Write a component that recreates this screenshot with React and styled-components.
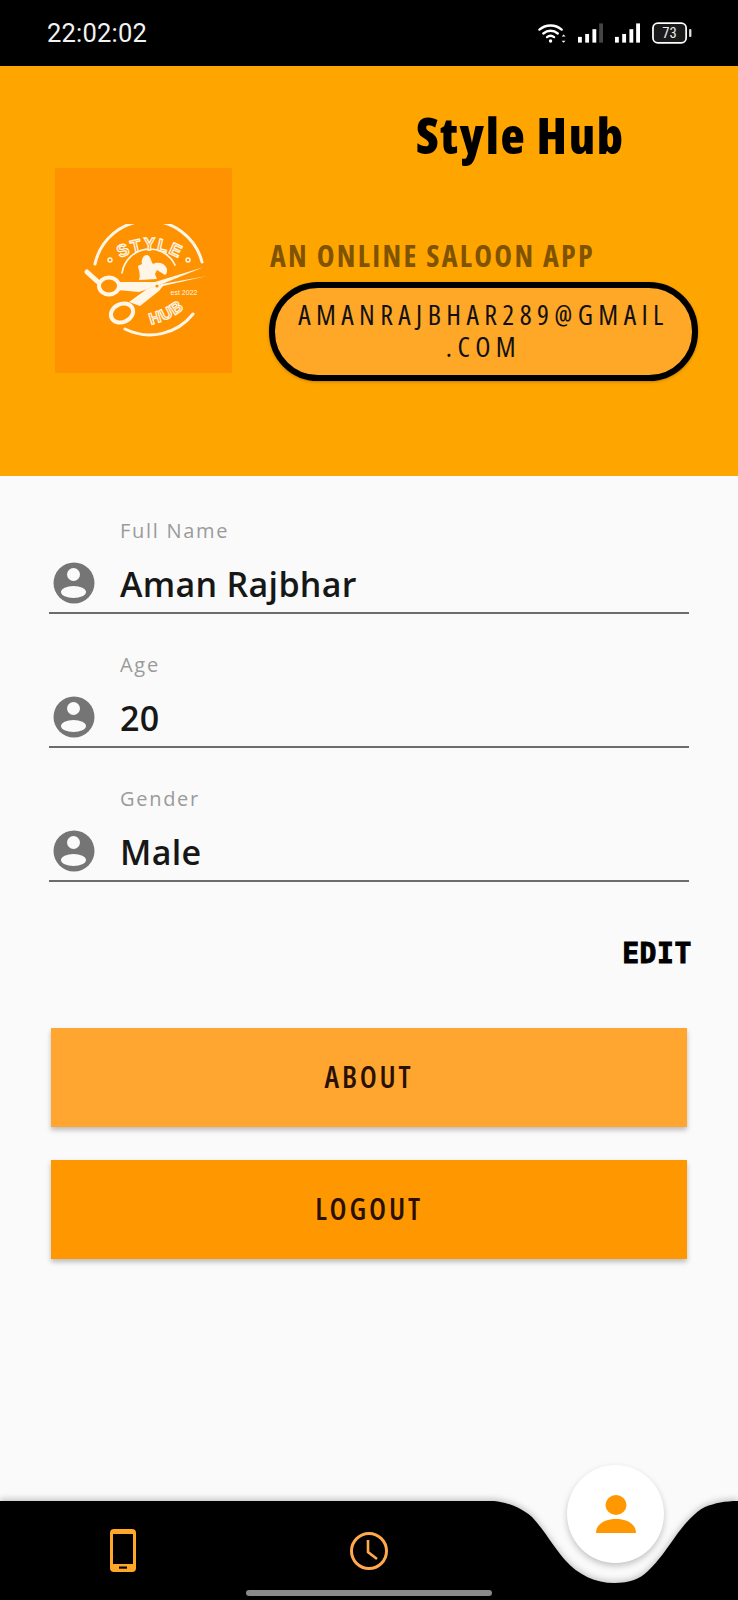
import React from "react";
import styled, { createGlobalStyle } from "styled-components";

const Global = createGlobalStyle`
  html, body { margin: 0; padding: 0; background: #fafafa; }
  #root { width: 738px; height: 1600px; }
`;

const hand = `"Open Sans", "Noto Sans", sans-serif`;

const Page = styled.div`
  width: 738px; height: 1600px; display: flex; flex-direction: column;
  overflow: hidden; background: #fafafa; font-family: ${hand}; font-stretch: 75%;
`;
const StatusBar = styled.div`
  height: 66px; flex: none; background: #000; color: #f2f2f2; display: flex;
  align-items: center; justify-content: space-between; padding: 0 46px 0 47px; box-sizing: border-box;
`;
const Clock = styled.span`
  font-family: "Roboto", sans-serif; font-stretch: 100%; font-size: 25.5px; letter-spacing: .2px; font-weight: 400;
`;
const Header = styled.header`
  height: 410px; flex: none; background: #ffa500; box-sizing: border-box; padding: 41px 0 0 55px;
`;
const Title = styled.h1`
  margin: 0 0 0 361px; height: 61px; font-size: 50px; line-height: 57px; font-weight: 800;
  letter-spacing: 1.6px; color: #000; white-space: nowrap;
`;
const HeaderRow = styled.div`display: flex; gap: 37px; align-items: flex-start;`;
const LogoBox = styled.div`width: 177px; height: 205px; flex: none; background: #ff9200; display: flex; justify-content: center; padding: 56px 0 0 3px; box-sizing: border-box;`;
const HeaderText = styled.div`display: flex; flex-direction: column; padding-top: 70px; align-items: flex-start;`;
const Tagline = styled.div`
  font-size: 30px; line-height: 36px; font-weight: 700; color: #7f5300; letter-spacing: 2.3px; white-space: nowrap; margin-left: 1px;
`;
const Pill = styled.div`
  width: 429px; height: 99px; box-sizing: border-box; margin-top: 8px; padding-bottom: 4px; border: 6px solid #000; border-radius: 49px;
  background: #ffa726; display: flex; align-items: center; justify-content: center; text-align: center;
  box-shadow: 0 1px 3px rgba(0,0,0,.25);
  font-size: 28px; line-height: 32px; font-weight: 500; letter-spacing: 5.4px; color: #111;
`;
const Form = styled.main`flex: 1; display: flex; flex-direction: column; padding: 4px 49px 0; position: relative;`;
const Field = styled.div`
  height: 134px; box-sizing: border-box; border-bottom: 2px solid #6c6c6c; display: flex; align-items: flex-end; padding: 0 0 8px 4px; gap: 25px;
`;
const FieldText = styled.div`display: flex; flex-direction: column;`;
const FieldLabel = styled.span`font-size: 20px; font-stretch: 100%; line-height: 26px; color: #9b9b9b; letter-spacing: 1.7px; margin-bottom: 20px;`;
const FieldValue = styled.span`font-size: 34px; font-stretch: 100%; line-height: 40px; font-weight: 600; color: #171717; letter-spacing: .3px;`;
const EditRow = styled.div`display: flex; justify-content: flex-end; margin: 57px -3px 0 0;`;
const Edit = styled.span`
  font-family: "DejaVu Sans Mono", monospace; font-weight: 700; font-size: 28px; line-height: 30px; color: #000;
  -webkit-text-stroke: 1px #000; letter-spacing: 0.6px; font-stretch: 100%;
`;
const Buttons = styled.div`display: flex; flex-direction: column; gap: 33px; margin: 59px 2px 0;`;
const Button = styled.button`
  height: 99px; border: 0; padding: 0 0 3px; background: ${p => p.$bg}; box-shadow: 0 3px 5px rgba(0,0,0,.25);
  font-family: ${hand}; font-stretch: 75%; font-size: 30px; font-weight: 600; letter-spacing: 2.8px; color: #2a1000;
`;
const Nav = styled.nav`height: 99px; flex: none; position: relative; display: flex;`;
const NavShape = styled.svg`position: absolute; left: 0; top: -10px; filter: drop-shadow(0 -2px 3px rgba(0,0,0,.22));`;
const NavItem = styled.div`position: relative; display: flex; justify-content: center; width: ${p => p.$w}px; padding-top: ${p => p.$top}px;`;
const Fab = styled.div`
  position: absolute; left: 567px; top: -36px; width: 97px; height: 98px; border-radius: 50%; background: #fff;
  box-shadow: 0 3px 6px rgba(0,0,0,.22); display: flex; align-items: center; justify-content: center;
`;
const HomeBar = styled.div`position: absolute; left: 246px; bottom: 4px; width: 246px; height: 6px; border-radius: 3px; background: #8a8a8a;`;

const AccountIcon = () => (
  <svg width="42" height="42" viewBox="0 0 42 42" style={{ flex: "none" }}>
    <circle cx="21" cy="21" r="20.5" fill="#757575" />
    <circle cx="20.5" cy="12.5" r="6.5" fill="#fafafa" />
    <ellipse cx="20.5" cy="30" rx="12.5" ry="6" fill="#fafafa" />
  </svg>
);

const Wifi = () => (
  <svg width="28" height="21" viewBox="0 0 29 21" fill="none" stroke="#fff" strokeWidth="2.4" strokeLinecap="round">
    <path d="M1.5 6.5C8 .8 18 .8 24.5 6.5" />
    <path d="M5.5 10.5C10 6.7 16 6.7 20.5 10.5" />
    <path d="M9.3 14.2C11.5 12.5 14.5 12.5 16.7 14.2" />
    <circle cx="13" cy="18.3" r="1.8" fill="#fff" stroke="none" />
    <path d="M26.5 11.5l-2 2h4zM26.5 20l-2-2h4z" fill="#fff" stroke="none" />
  </svg>
);
const Signal = ({ last }) => (
  <svg width="25" height="21" viewBox="0 0 26 21">
    <rect x="0" y="14" width="4" height="6" fill="#fff" />
    <rect x="7.5" y="11" width="4" height="9" fill="#fff" />
    <rect x="15" y="6" width="4" height="14" fill="#fff" />
    <rect x="22" y="0" width="4" height="20" fill={last} />
  </svg>
);
const Battery = () => (
  <svg width="40" height="22" viewBox="0 0 41 22">
    <rect x="1" y="1" width="34" height="20" rx="5" fill="#1a1a1a" stroke="#fff" strokeWidth="1.8" />
    <rect x="38" y="7" width="2.4" height="8" rx="1" fill="#ddd" />
    <text x="18" y="16.5" textAnchor="middle" fontFamily="Roboto, sans-serif" fontSize="15" fill="#eee">73</text>
  </svg>
);
const StatusIcons = styled.div`display: flex; align-items: center; gap: 12px;`;

const ink = "#fff6e8";
const Logo = () => (
  <svg width="125" height="115" viewBox="0 0 125 115" fill="none" stroke={ink} strokeLinecap="round">
    <defs>
      <path id="styleArc" d="M30 40A56 56 0 0 1 104 40" />
      <path id="hubArc" d="M60 102Q88 98 108 79" />
    </defs>
    <path d="M12 40A55 55 0 0 1 119 38" strokeWidth="3" />
    <path d="M42 105A55 55 0 0 0 110 90" strokeWidth="3" />
    <path d="M39 49A28 28 0 0 1 92 41" strokeWidth="1.7" />
    <circle cx="27" cy="36" r="2" strokeWidth="1.4" />
    <circle cx="105" cy="36" r="2" strokeWidth="1.4" />
    <text fontFamily="Liberation Sans, sans-serif" fontWeight="700" fontSize="17" stroke={ink} strokeWidth="1.3" fill="#ff9200" letterSpacing="1.4" textAnchor="middle">
      <textPath href="#styleArc" startOffset="50%">STYLE</textPath>
    </text>
    <text fontFamily="Liberation Sans, sans-serif" fontWeight="700" fontSize="16" stroke={ink} strokeWidth="1.3" fill="#ff9200" letterSpacing="1" textAnchor="middle">
      <textPath href="#hubArc" startOffset="50%">HUB</textPath>
    </text>
    <path d="M56 56C58 50 55 44 55 42L59 40C58 36 60 31 64 31C68 32 68 38 70 40C74 38 80 38 83 43C85 46 84 50 82 51L74 46L72 50L74 55Z" fill={ink} stroke="none" />
    <path d="M34 58L72 58L121 43L79 60L56 68L34 66Z" fill={ink} stroke="none" />
    <path d="M124 52L80 62L76 67L57 82L46 78L64 65L79 60Z" fill={ink} stroke="none" />
    <ellipse cx="26" cy="62" rx="10" ry="8.5" strokeWidth="4" fill="#ff9200" />
    <ellipse cx="39" cy="89" rx="11.5" ry="9" strokeWidth="4" fill="#ff9200" transform="rotate(-25 39 89)" />
    <path d="M4 48L15 58" strokeWidth="5" />
    <circle cx="74" cy="62" r="1.6" fill="#ff9200" stroke="none" />
    <text x="101" y="71" textAnchor="middle" fontFamily="Liberation Sans, sans-serif" fontSize="7" fill={ink} stroke="none">est 2022</text>
  </svg>
);

const Phone = () => (
  <svg width="26" height="43" viewBox="0 0 26 43">
    <rect width="26" height="43" rx="4" fill="#ffa726" />
    <rect x="3" y="5" width="20" height="30" fill="#000" />
    <rect x="9" y="37.5" width="8" height="2.2" fill="#000" />
  </svg>
);
const ClockIcon = () => (
  <svg width="38" height="38" viewBox="0 0 38 38" fill="none" stroke="#ffa94d" strokeWidth="3">
    <circle cx="19" cy="19" r="17.5" />
    <path d="M18 8V20L27 27" strokeWidth="2.6" />
  </svg>
);
const Person = () => (
  <svg width="40" height="38" viewBox="0 0 40 38" fill="#ff9800">
    <ellipse cx="20" cy="10" rx="10.5" ry="10" />
    <path d="M0 38C0 29 9 24 20 24S40 29 40 38Z" />
  </svg>
);

const fields = [
  ["Full Name", "Aman Rajbhar"],
  ["Age", "20"],
  ["Gender", "Male"],
];

export default function App() {
  return (
    <Page>
      <Global />
      <StatusBar>
        <Clock>22:02:02</Clock>
        <StatusIcons>
          <Wifi />
          <Signal last="#444" />
          <Signal last="#fff" />
          <Battery />
        </StatusIcons>
      </StatusBar>
      <Header>
        <Title>Style Hub</Title>
        <HeaderRow>
          <LogoBox><Logo /></LogoBox>
          <HeaderText>
            <Tagline>AN ONLINE SALOON APP</Tagline>
            <Pill><span>AMANRAJBHAR289@GMAIL<br />.COM</span></Pill>
          </HeaderText>
        </HeaderRow>
      </Header>
      <Form>
        {fields.map(([label, value]) => (
          <Field key={label}>
            <AccountIcon />
            <FieldText>
              <FieldLabel>{label}</FieldLabel>
              <FieldValue>{value}</FieldValue>
            </FieldText>
          </Field>
        ))}
        <EditRow><Edit>EDIT</Edit></EditRow>
        <Buttons>
          <Button $bg="#ffa630">ABOUT</Button>
          <Button $bg="#ff9800">LOGOUT</Button>
        </Buttons>
      </Form>
      <Nav>
        <NavShape width="738" height="109" viewBox="0 -10 738 109">
          <path d="M0 0H494C512 2 524 9 532 16C545 30 555 48 565 59C578 74 596 82 614 82C630 82 640 78 648 70C660 58 665 50 673 39C683 24 695 11 705 6C715 2 725 0 738 0V99H0Z" fill="#000" />
        </NavShape>
        <NavItem $w={246} $top={28}><Phone /></NavItem>
        <NavItem $w={246} $top={31}><ClockIcon /></NavItem>
        <Fab><Person /></Fab>
        <HomeBar />
      </Nav>
    </Page>
  );
}
